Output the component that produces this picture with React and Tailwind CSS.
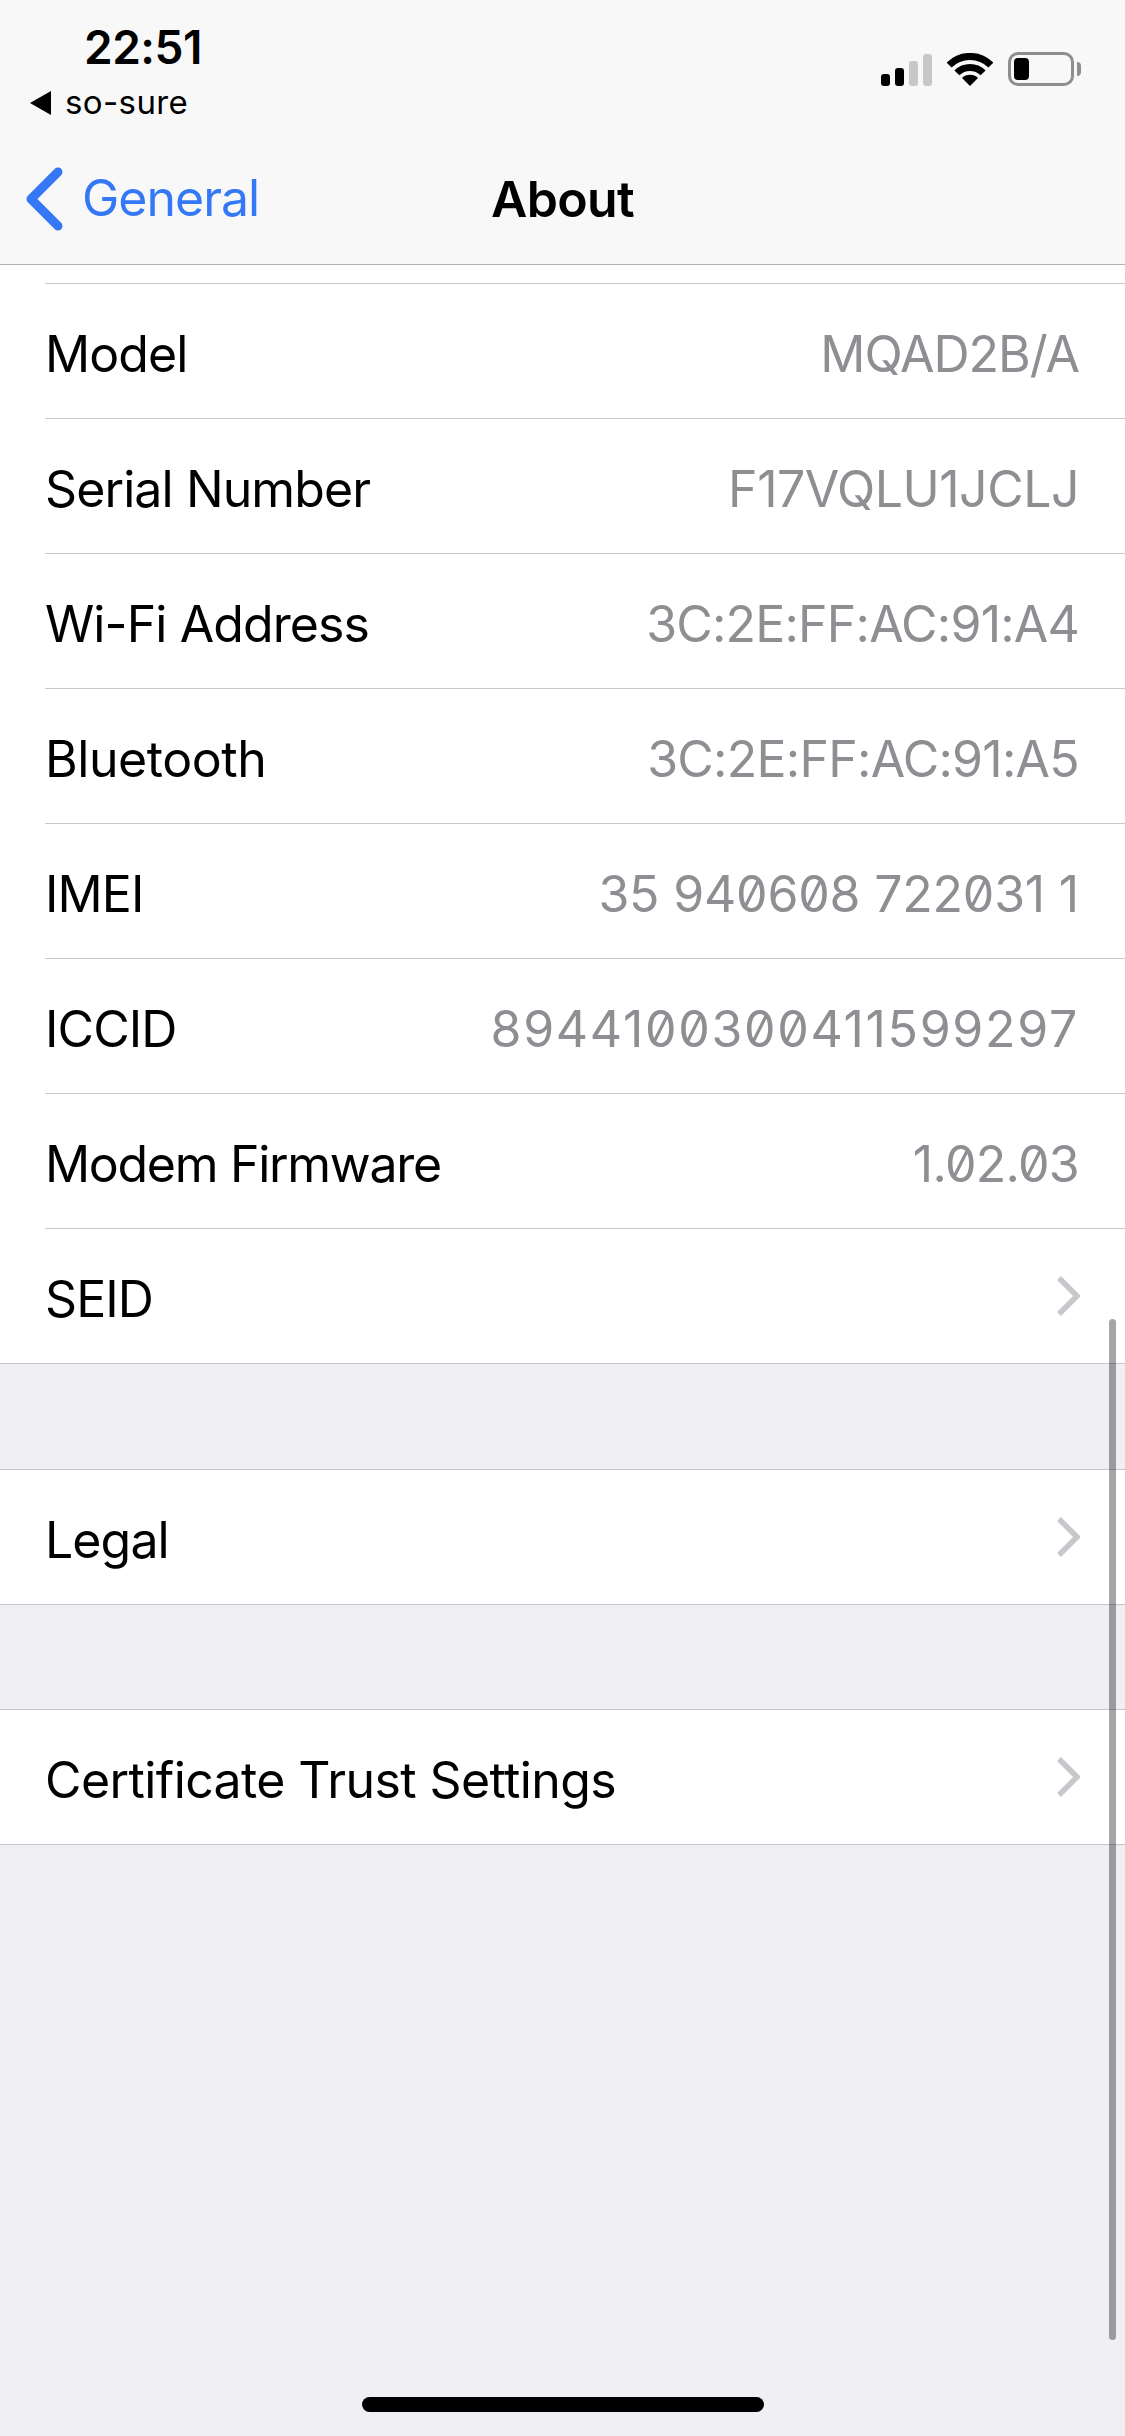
const rows = [
  { label: "Model", value: "MQAD2B/A", track: "tracking-[-1px]" },
  { label: "Serial Number", value: "F17VQLU1JCLJ", track: "tracking-[-0.5px]" },
  { label: "Wi-Fi Address", value: "3C:2E:FF:AC:91:A4", track: "tracking-[-0.8px]" },
  { label: "Bluetooth", labelTrack: "tracking-[-0.45px]", value: "3C:2E:FF:AC:91:A5", track: "tracking-[-0.75px]" },
  { label: "IMEI", value: "35 940608 722031 1", track: "tracking-[-0.2px]" },
  { label: "ICCID", value: "8944100300411599297", track: "tracking-[1.7px]" },
  { label: "Modem Firmware", labelTrack: "tracking-[-1.3px]", value: "1.02.03", track: "tracking-[-0.7px]" },
];

const Chevron = () => (
  <svg width="24" height="40" viewBox="0 0 24 40" className="mt-[-6px] mr-[-1px]">
    <path d="M3 2 L21 20 L3 38" fill="none" stroke="#c7c7cc" strokeWidth="5.5" />
  </svg>
);

const Row = ({ label, labelTrack = "tracking-[-0.9px]", value, track, chevron, last }) => (
  <div className="pl-[45px]">
    <div className={`pr-[46px] pt-[6px] flex items-center justify-between ${last ? "h-[134px]" : "h-[135px] border-b border-[#c8c7cc]"}`}>
      <span className={`text-[50px] text-black ${labelTrack}`}>{label}</span>
      {value && <span className={`text-[50px] text-[#8e8e93] slashed-zero ${track}`}>{value}</span>}
      {chevron && <Chevron />}
    </div>
  </div>
);

const Section = ({ label, labelTrack }) => (
  <div className="bg-white border-y border-[#c8c7cc]">
    <Row label={label} labelTrack={labelTrack} chevron last />
  </div>
);

const StatusIcons = () => (
  <div className="flex items-end">
    <div className="flex items-end gap-[5px] mr-[15px]">
      <div className="w-[9px] h-[12px] rounded-[3px] bg-black" />
      <div className="w-[9px] h-[18px] rounded-[3px] bg-black" />
      <div className="w-[9px] h-[25px] rounded-[3px] bg-[#c7c7c7]" />
      <div className="w-[9px] h-[32px] rounded-[3px] bg-[#c7c7c7]" />
    </div>
    <svg width="46" height="33" viewBox="0 0 46 33" className="mr-[15px]">
      <path d="M2.1 12.1 A29.5 29.5 0 0 1 43.9 12.1" fill="none" stroke="#000" strokeWidth="7" />
      <path d="M9.9 19.9 A18.5 18.5 0 0 1 36.1 19.9" fill="none" stroke="#000" strokeWidth="7" />
      <path d="M23 33 L15 25 A11.3 11.3 0 0 1 31 25 Z" fill="#000" />
    </svg>
    <div className="w-[66px] h-[34px] rounded-[10px] border-[3px] border-[#8e8e8e] p-[3px]">
      <div className="w-[15px] h-full rounded-[4px] bg-black" />
    </div>
    <div className="w-[4px] h-[14px] mb-[10px] ml-[3px] rounded-r-[4px] bg-[#8e8e8e]" />
  </div>
);

const App = () => {
  return (
    <div className="relative h-[2436px] w-[1125px] overflow-hidden bg-[#efeff4] font-['Inter',sans-serif]">
      {/* nav */}
      <div className="h-[265px] bg-[#f8f8f8] border-b border-[#b2b2b2]">
        <div className="flex justify-between pl-[30px] pr-[44px]">
          <div>
            <div className="pl-[54px] pt-[20px] h-[74px] text-[46px] leading-[54px] font-semibold text-black tracking-[-0.5px]">22:51</div>
            <div className="flex items-center h-[57px]">
              <svg width="21" height="24" viewBox="0 0 21 24" className="mr-[14px]">
                <path d="M0 12 L21 0 V24 Z" fill="#000" />
              </svg>
              <span className="text-[33px] text-black tracking-[0.4px]">so-sure</span>
            </div>
          </div>
          <div className="pt-[52px]">
            <StatusIcons />
          </div>
        </div>
        <div className="relative flex items-center justify-center h-[80px] mt-[28px]">
          <div className="absolute left-[25px] top-[2px] flex items-center">
            <svg width="40" height="64" viewBox="0 0 40 64" className="mr-[17px]">
              <path d="M33 5 L6 32 L33 59" fill="none" stroke="#3478f6" strokeWidth="9" strokeLinecap="round" strokeLinejoin="round" />
            </svg>
            <span className="text-[50px] text-[#3478f6] tracking-[-1px]">General</span>
          </div>
          <span className="text-[50px] font-semibold text-black tracking-[-0.7px]">About</span>
        </div>
      </div>

      {/* list */}
      <div className="bg-white border-b border-[#c8c7cc]">
        <div className="h-[19px] ml-[45px] border-b border-[#c8c7cc]" />
        {rows.map((row) => (
          <Row key={row.label} {...row} />
        ))}
        <Row label="SEID" chevron last />
      </div>
      <div className="mt-[105px]">
        <Section label="Legal" />
      </div>
      <div className="mt-[104px]">
        <Section label="Certificate Trust Settings" labelTrack="tracking-[-0.6px]" />
      </div>

      {/* scroll indicator + home bar lie over the page */}
      <div className="absolute left-[1109px] top-[1319px] w-[7px] h-[1021px] rounded-full bg-black/35" />
      <div className="absolute left-[362px] top-[2397px] w-[402px] h-[15px] rounded-full bg-black" />
    </div>
  );
};

export default App;
